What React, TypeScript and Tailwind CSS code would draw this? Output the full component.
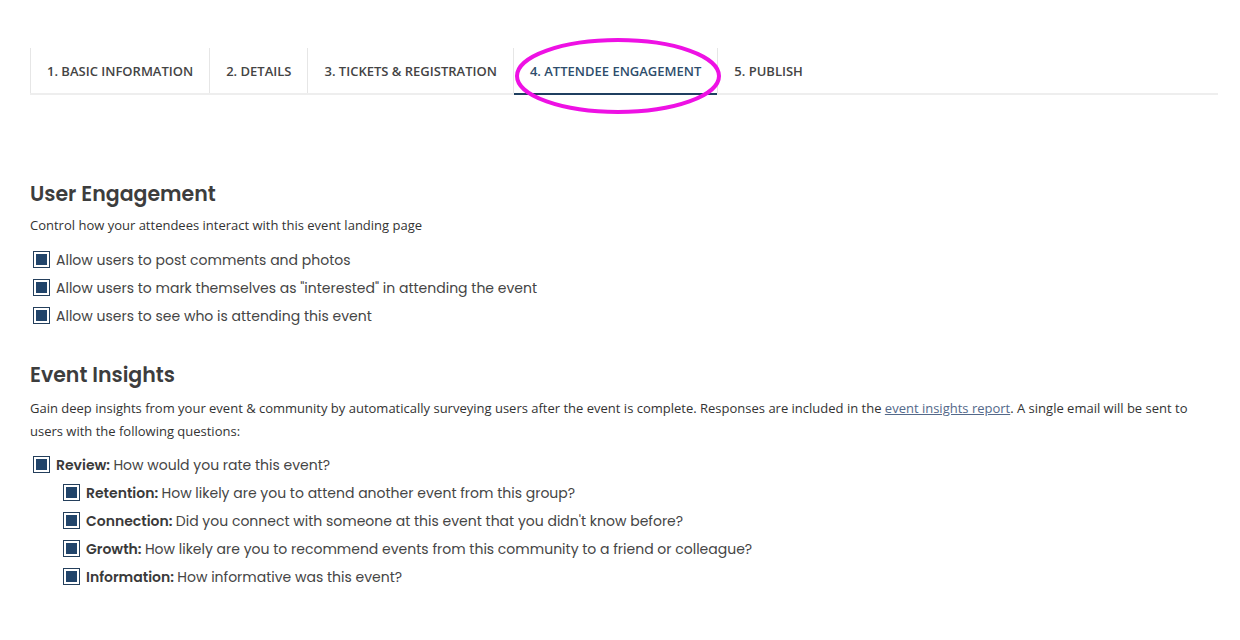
import React from "react";

const body = { fontFamily: '"Open Sans", "Liberation Sans", sans-serif' };
const pop = { fontFamily: 'Poppins, "Noto Sans", "Liberation Sans", sans-serif' };

function Box() {
  return (
    <span className="inline-flex h-[17px] w-[17px] shrink-0 items-center justify-center border-[1.5px] border-[#243f5c] bg-white p-[2px]">
      <span className="block h-full w-full bg-[#21446a]" />
    </span>
  );
}

function Item({ label, bold }: { label: string; bold?: string }) {
  return (
    <div className="flex h-[28px] items-center gap-[6px]">
      <Box />
      <span className="mt-[2px] text-[14px] text-[#454545]" style={pop}>
        {bold && <span className="font-semibold text-[#3a3a3a]">{bold} </span>}
        {label}
      </span>
    </div>
  );
}

const tabs = [
  "1. BASIC INFORMATION",
  "2. DETAILS",
  "3. TICKETS & REGISTRATION",
  "4. ATTENDEE ENGAGEMENT",
  "5. PUBLISH",
];

export default function App() {
  return (
    <div className="relative h-[640px] w-[1240px] bg-white pl-[30px] pr-[22px] pt-[48px]" style={body}>
      <div className="flex h-[47px] border-b-2 border-[#eeeeee]">
        {tabs.map((t, i) => {
          const active = i === 3;
          return (
            <div
              key={t}
              className={
                "relative flex items-center px-[16px] pt-[3px] text-[13px] font-semibold " +
                (i < 4 ? "border-l border-[#e6e6e6] " : "") +
                (i === 3 ? "border-r border-[#e6e6e6] " : "") +
                (active ? "text-[#2e4d6c]" : "text-[#444444]")
              }
            >
              {t}
              {active && <span className="absolute -bottom-[2px] left-0 right-0 h-[2px] bg-[#1f3f60]" />}
            </div>
          );
        })}
      </div>

      <svg className="pointer-events-none absolute left-[513px] top-[36px]" width="210" height="80" viewBox="0 0 210 80">
        <ellipse cx="105" cy="40" rx="101" ry="36" fill="none" stroke="#ee11e4" strokeWidth="4" />
      </svg>

      <div className="pt-[85px]">
        <h2 className="text-[20.5px] font-semibold leading-[28px] text-[#3d3d3d]" style={pop}>
          User Engagement
        </h2>
        <p className="mt-[8px] text-[13px] leading-[18px] text-[#333333]">
          Control how your attendees interact with this event landing page
        </p>
        <div className="mt-[11px] pl-[3px]">
          <Item label="Allow users to post comments and photos" />
          <Item label={'Allow users to mark themselves as "interested" in attending the event'} />
          <Item label="Allow users to see who is attending this event" />
        </div>

        <h2 className="mt-[32px] text-[20.5px] font-semibold leading-[28px] text-[#3d3d3d]" style={pop}>
          Event Insights
        </h2>
        <p className="mt-[8px] text-[13px] leading-[23px] text-[#333333]">
          Gain deep insights from your event &amp; community by automatically surveying users after the event is complete. Responses are included in the{" "}
          <a className="text-[#54698a] underline">event insights report</a>. A single email will be sent to users with the following questions:
        </p>
        <div className="mt-[7px] pl-[3px]">
          <Item bold="Review:" label="How would you rate this event?" />
          <div className="pl-[30px]">
            <Item bold="Retention:" label="How likely are you to attend another event from this group?" />
            <Item bold="Connection:" label="Did you connect with someone at this event that you didn't know before?" />
            <Item bold="Growth:" label="How likely are you to recommend events from this community to a friend or colleague?" />
            <Item bold="Information:" label="How informative was this event?" />
          </div>
        </div>
      </div>
    </div>
  );
}
